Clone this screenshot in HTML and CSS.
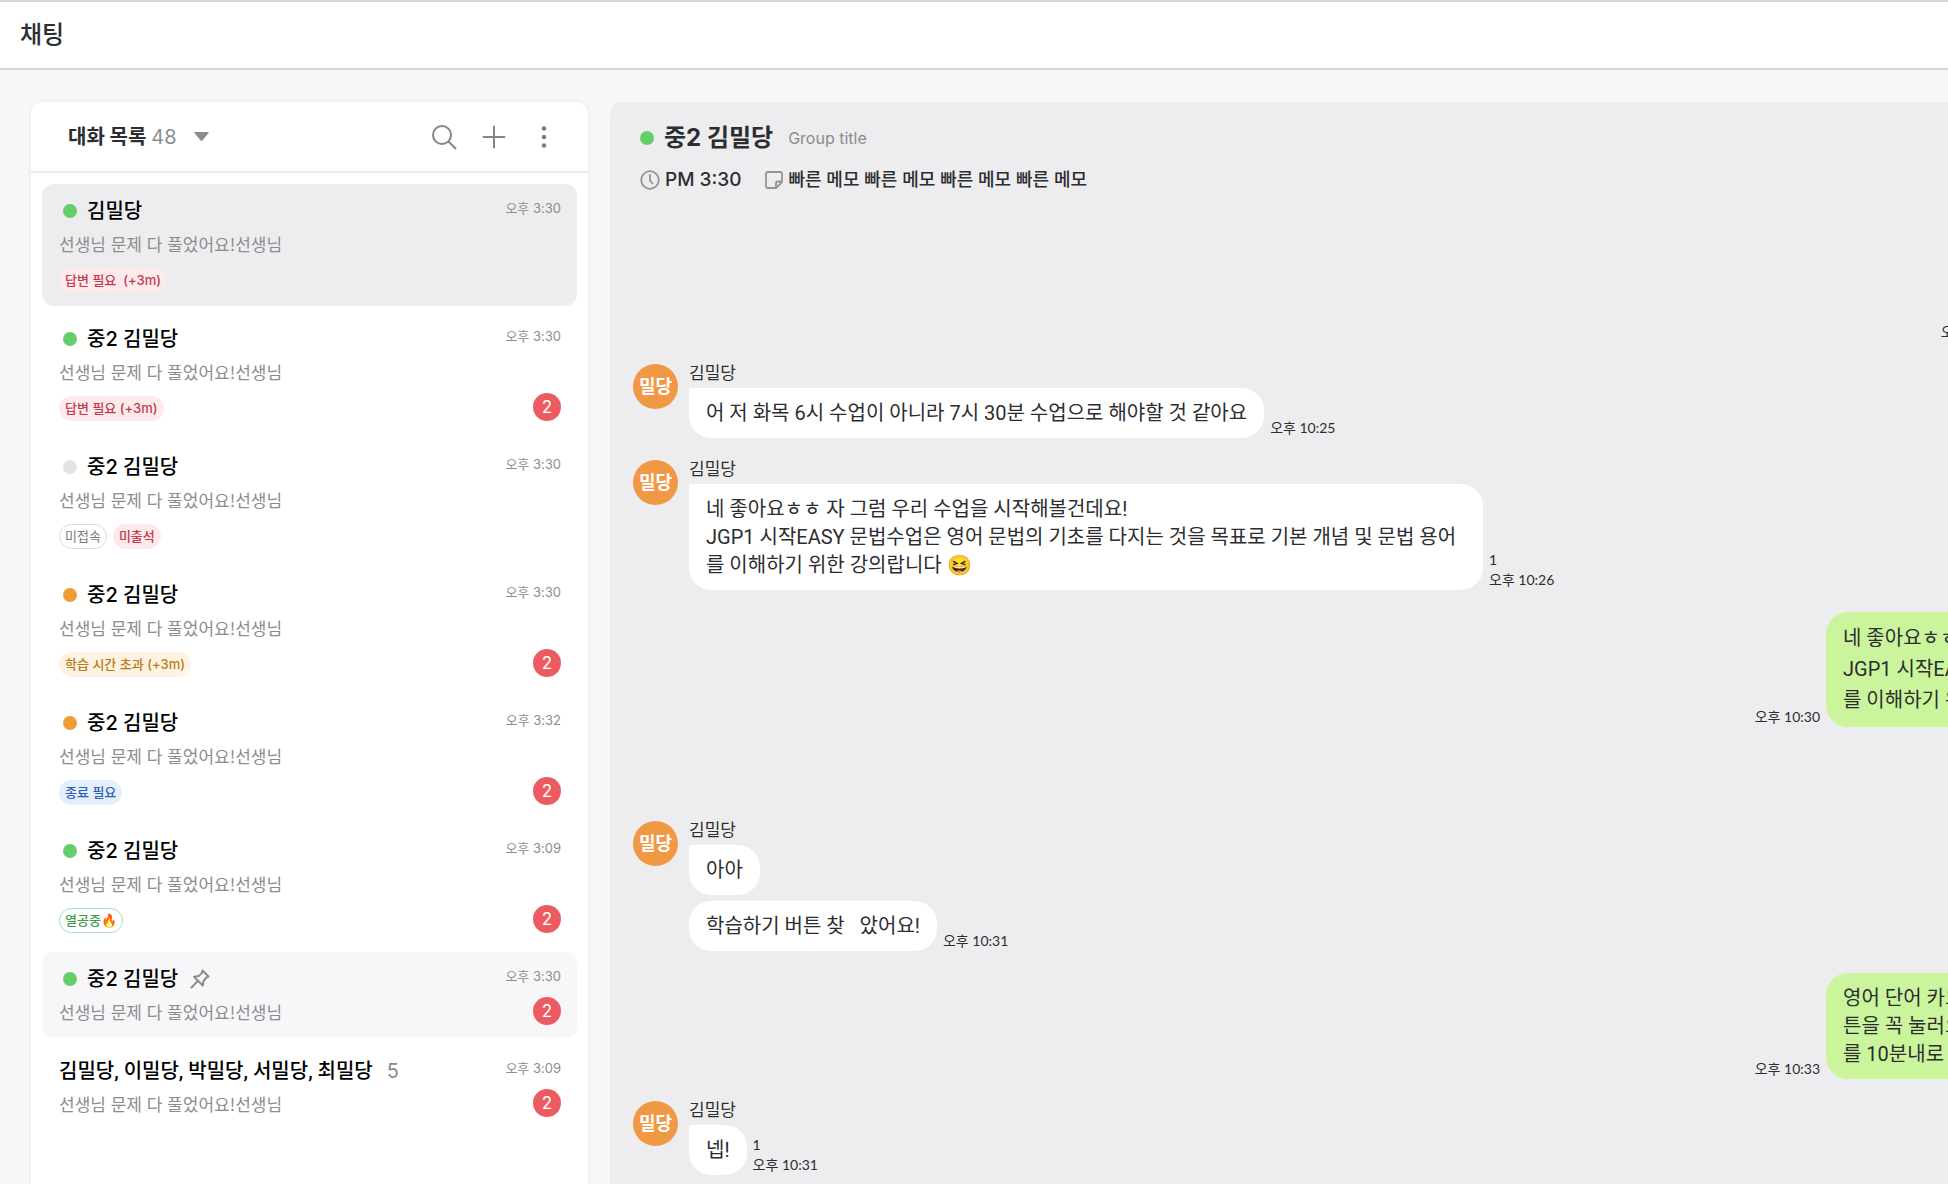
FILE: index.html
```html
<!DOCTYPE html>
<html lang="ko">
<head>
    <meta charset="UTF-8">
    <meta name="viewport" content="width=device-width, initial-scale=1.0">
    <title>채팅</title>
    <link rel="stylesheet" href="styles.css">
</head>
<body>
    <header class="topbar">
        <h1>채팅</h1>
    </header>

    <main class="layout">
        <section class="rooms">
            <div class="rooms-header">
                <button class="filter" type="button">
                    <strong>대화 목록</strong>
                    <span class="count">48</span>
                    <svg class="caret" width="15" height="9" viewBox="0 0 15 9"><path d="M1 0h13q1.4 0 .6 1L8.400 8.400q-.9.9-1.800 0L.4 1Q-.4 0 1 0z" fill="#8c8c8e"/></svg>
                </button>
                <div class="actions">
                    <button type="button" aria-label="검색">
                        <svg width="26" height="26" viewBox="0 0 26 26" fill="none" stroke="#858587" stroke-width="2" stroke-linecap="round"><circle cx="11" cy="11" r="9"/><path d="M17.500 17.500l7 7"/></svg>
                    </button>
                    <button type="button" aria-label="대화 추가">
                        <svg width="26" height="26" viewBox="0 0 26 26" fill="none" stroke="#858587" stroke-width="2" stroke-linecap="round"><path d="M13 2.500v21M2.500 13h21"/></svg>
                    </button>
                    <button type="button" aria-label="더보기">
                        <svg width="26" height="26" viewBox="0 0 26 26" fill="#7b7b7d"><circle cx="13" cy="4.500" r="2.200"/><circle cx="13" cy="13" r="2.200"/><circle cx="13" cy="21.500" r="2.200"/></svg>
                    </button>
                </div>
            </div>

            <ul class="room-list">
                <li>
                    <a class="room selected" href="#">
                        <div class="room-main">
                            <div class="room-name"><i class="dot green"></i>김밀당</div>
                            <p class="preview">선생님 문제 다 풀었어요!선생님</p>
                            <div class="tags"><span class="tag red">답변 필요&nbsp; (+3m)</span></div>
                        </div>
                        <div class="room-side"><time>오후 3:30</time></div>
                    </a>
                </li>
                <li>
                    <a class="room" href="#">
                        <div class="room-main">
                            <div class="room-name"><i class="dot green"></i>중2 김밀당</div>
                            <p class="preview">선생님 문제 다 풀었어요!선생님</p>
                            <div class="tags"><span class="tag red">답변 필요 (+3m)</span></div>
                        </div>
                        <div class="room-side"><time>오후 3:30</time><span class="badge">2</span></div>
                    </a>
                </li>
                <li>
                    <a class="room" href="#">
                        <div class="room-main">
                            <div class="room-name"><i class="dot gray"></i>중2 김밀당</div>
                            <p class="preview">선생님 문제 다 풀었어요!선생님</p>
                            <div class="tags"><span class="tag outline">미접속</span><span class="tag red">미출석</span></div>
                        </div>
                        <div class="room-side"><time>오후 3:30</time></div>
                    </a>
                </li>
                <li>
                    <a class="room" href="#">
                        <div class="room-main">
                            <div class="room-name"><i class="dot orange"></i>중2 김밀당</div>
                            <p class="preview">선생님 문제 다 풀었어요!선생님</p>
                            <div class="tags"><span class="tag yellow">학습 시간 초과 (+3m)</span></div>
                        </div>
                        <div class="room-side"><time>오후 3:30</time><span class="badge">2</span></div>
                    </a>
                </li>
                <li>
                    <a class="room" href="#">
                        <div class="room-main">
                            <div class="room-name"><i class="dot orange"></i>중2 김밀당</div>
                            <p class="preview">선생님 문제 다 풀었어요!선생님</p>
                            <div class="tags"><span class="tag blue">종료 필요</span></div>
                        </div>
                        <div class="room-side"><time>오후 3:32</time><span class="badge">2</span></div>
                    </a>
                </li>
                <li>
                    <a class="room" href="#">
                        <div class="room-main">
                            <div class="room-name"><i class="dot green"></i>중2 김밀당</div>
                            <p class="preview">선생님 문제 다 풀었어요!선생님</p>
                            <div class="tags"><span class="tag outline-green">열공중🔥</span></div>
                        </div>
                        <div class="room-side"><time>오후 3:09</time><span class="badge">2</span></div>
                    </a>
                </li>
                <li>
                    <a class="room hover" href="#">
                        <div class="room-main">
                            <div class="room-name">
                                <i class="dot green"></i>중2 김밀당
                                <svg class="pin" width="20" height="20" viewBox="0 0 20 20" fill="none" stroke="#8c8c8e" stroke-width="2" stroke-linejoin="round" stroke-linecap="round"><path d="M12.500 1.500l6 6-2 .8-3 3.700-.6 4.600-8.900-8.900 4.700-.6 3.300-3.200zM7.500 12.200L1.500 18.500"/></svg>
                            </div>
                            <p class="preview">선생님 문제 다 풀었어요!선생님</p>
                        </div>
                        <div class="room-side"><time>오후 3:30</time><span class="badge">2</span></div>
                    </a>
                </li>
                <li>
                    <a class="room" href="#">
                        <div class="room-main">
                            <div class="room-name group-name">김밀당, 이밀당, 박밀당, 서밀당, 최밀당 <span class="members">5</span></div>
                            <p class="preview">선생님 문제 다 풀었어요!선생님</p>
                        </div>
                        <div class="room-side"><time>오후 3:09</time><span class="badge">2</span></div>
                    </a>
                </li>
            </ul>
        </section>

        <section class="chat">
            <div class="chat-header">
                <div class="chat-title">
                    <i class="dot green"></i>
                    <h2>중2 김밀당</h2>
                    <span class="group">Group title</span>
                </div>
                <div class="chat-info">
                    <svg width="20" height="20" viewBox="0 0 20 20" fill="none" stroke="#949496" stroke-width="1.800" stroke-linecap="round" stroke-linejoin="round"><circle cx="10" cy="10" r="8.800"/><path d="M10 5v5.500l2.500 3"/></svg>
                    <span class="class-time">PM 3:30</span>
                    <svg width="18" height="18" viewBox="0 0 18 18" fill="none" stroke="#949496" stroke-width="1.800" stroke-linejoin="round"><path d="M3 1h12q2 0 2 2v8l-6 6H3q-2 0-2-2V3q0-2 2-2z"/><path d="M17 10.500h-4q-2 0-2 2V17"/></svg>
                    <span>빠른 메모 빠른 메모 빠른 메모 빠른 메모</span>
                </div>
            </div>

            <div class="thread">
                <div class="message mine">
                    <div class="bubble half">네 좋아요ㅎㅎ 자 그럼 우리 수업을 시작해볼건데요!</div>
                    <div class="meta"><time>오후 10:24</time></div>
                </div>

                <div class="message">
                    <div class="avatar">밀당</div>
                    <div class="body">
                        <div class="sender">김밀당</div>
                        <div class="line">
                            <div class="bubble first">어 저 화목 6시 수업이 아니라 7시 30분 수업으로 해야할 것 같아요</div>
                            <div class="meta"><time>오후 10:25</time></div>
                        </div>
                    </div>
                </div>

                <div class="message">
                    <div class="avatar">밀당</div>
                    <div class="body">
                        <div class="sender">김밀당</div>
                        <div class="line">
                            <div class="bubble first wide">네 좋아요ㅎㅎ 자 그럼 우리 수업을 시작해볼건데요!<br>JGP1 시작EASY 문법수업은 영어 문법의 기초를 다지는 것을 목표로 기본 개념 및 문법 용어<br>를 이해하기 위한 강의랍니다 😆</div>
                            <div class="meta"><span>1</span><time>오후 10:26</time></div>
                        </div>
                    </div>
                </div>

                <div class="message mine">
                    <div class="bubble wide loose">네 좋아요ㅎㅎ 자 그럼 우리 수업을 시작해볼건데요!<br>JGP1 시작EASY 문법수업은 영어 문법의 기초를 다지는 것을 목표로 기본 개념 및 문법 용어<br>를 이해하기 위한 강의랍니다</div>
                    <div class="meta"><time>오후 10:30</time></div>
                </div>

                <div class="message mine">
                    <div class="bubble">네!</div>
                    <div class="meta"><time>오후 10:30</time></div>
                </div>

                <div class="message">
                    <div class="avatar">밀당</div>
                    <div class="body">
                        <div class="sender">김밀당</div>
                        <div class="line">
                            <div class="bubble first">아아</div>
                        </div>
                        <div class="line">
                            <div class="bubble">학습하기 버튼 찾   았어요!</div>
                            <div class="meta"><time>오후 10:31</time></div>
                        </div>
                    </div>
                </div>

                <div class="message mine">
                    <div class="bubble wide">영어 단어 카드<br>튼을 꼭 눌러요<br>를 10분내로</div>
                    <div class="meta"><time>오후 10:33</time></div>
                </div>

                <div class="message">
                    <div class="avatar">밀당</div>
                    <div class="body">
                        <div class="sender">김밀당</div>
                        <div class="line">
                            <div class="bubble first">넵!</div>
                            <div class="meta"><span>1</span><time>오후 10:31</time></div>
                        </div>
                    </div>
                </div>
            </div>
        </section>
    </main>
</body>
</html>
```
FILE: styles.css
```css
* {
    box-sizing: border-box;
}
body {
    margin: 0;
    height: 100vh;
    display: flex;
    flex-direction: column;
    overflow: hidden;
    background-color: #f7f7fa;
    color: #2c2d30;
    font-family: Inter, "Noto Sans CJK KR", sans-serif;
}
h1, h2, p, ul {
    margin: 0;
    padding: 0;
}
ul {
    list-style: none;
}
button {
    padding: 0;
    border: none;
    background: none;
    color: inherit;
    font-family: inherit;
    cursor: pointer;
}
svg {
    display: block;
    flex: none;
}

.topbar {
    flex: none;
    padding: 17px 20px;
    background-color: #fff;
    border-top: 2px solid #d8d8da;
    border-bottom: 2px solid #d8d8da;
}
.topbar h1 {
    font-size: 24px;
    line-height: 32px;
    font-weight: 500;
}

.layout {
    flex: 1;
    min-height: 0;
    display: flex;
    gap: 22px;
    padding: 32px 0 0 31px;
}

/* room list */
.rooms {
    flex: none;
    width: 557px;
    background-color: #fff;
    border-radius: 12px 12px 0 0;
    box-shadow: 0 0 4px rgba(0, 0, 0, 0.08);
}
.rooms-header {
    display: flex;
    justify-content: space-between;
    align-items: center;
    height: 71px;
    padding: 0 31px 0 37px;
    border-bottom: 2px solid #ececee;
}
.filter {
    display: flex;
    align-items: center;
    gap: 5px;
    font-size: 20px;
    line-height: 28px;
}
.count {
    color: #8c8c8e;
}
.caret {
    margin-left: 12px;
}
.actions {
    display: flex;
    gap: 24px;
}

.room-list {
    display: flex;
    flex-direction: column;
    gap: 6px;
    padding: 11px;
}
.room {
    display: flex;
    justify-content: space-between;
    min-height: 86px;
    padding: 14px 16px 13px 17px;
    border-radius: 12px;
    color: #000;
    text-decoration: none;
}
.room.selected {
    background-color: #ededef;
}
.room.hover {
    background-color: #f7f7fa;
}
.room-name {
    display: flex;
    align-items: center;
    font-size: 20px;
    line-height: 26px;
    font-weight: 500;
}
.group-name {
    font-family: Roboto, "Noto Sans CJK KR", sans-serif;
}
.dot {
    flex: none;
    width: 14px;
    height: 14px;
    border-radius: 50%;
}
.room-name .dot {
    margin: 0 10px 0 4px;
}
.dot.green {
    background-color: #63cf6b;
}
.dot.gray {
    background-color: #e3e3e4;
}
.dot.orange {
    background-color: #f09c35;
}
.pin {
    margin-left: 12px;
}
.members {
    margin-left: 14px;
    color: #8c8c8e;
    font-family: Inter, sans-serif;
    font-weight: 400;
}
.preview {
    margin-top: 8px;
    color: #8c8c8e;
    font-family: "Noto Sans CJK KR", sans-serif;
    font-size: 17px;
    line-height: 24px;
}
.tags {
    display: flex;
    gap: 6px;
    margin-top: 12px;
}
.tag {
    padding: 0 5px;
    border: 1px solid transparent;
    border-radius: 13px;
    font-size: 13px;
    line-height: 23px;
    font-weight: 500;
}
.tag.red {
    background-color: #fdebec;
    color: #c23a50;
}
.tag.yellow {
    background-color: #fef2e2;
    color: #b97a18;
}
.tag.blue {
    background-color: #e3effc;
    color: #2a62b8;
}
.tag.outline {
    border-color: #dcdcde;
    color: #7b7b7d;
    font-weight: 400;
}
.tag.outline-green {
    border-color: #a9dfae;
    color: #3f9c4b;
}
.room-side {
    display: flex;
    flex-direction: column;
    justify-content: space-between;
    align-items: flex-end;
    color: #8c8c8e;
    font-size: 13px;
    line-height: 20px;
}
.badge {
    width: 28px;
    height: 28px;
    border-radius: 50%;
    background-color: #eb5c62;
    color: #fff;
    font-size: 17px;
    line-height: 28px;
    text-align: center;
}

/* conversation, runs past the right edge of the window */
.chat {
    flex: 1;
    margin-right: -696px;
    padding: 20px 24px 0 23px;
    background-color: #ededef;
    border-radius: 12px 0 0 0;
}
.chat-header {
    padding-left: 7px;
}
.chat-title {
    display: flex;
    align-items: center;
    line-height: 32px;
}
.chat-title h2 {
    margin: 0 15px 0 10px;
    font-size: 24px;
}
.group {
    color: #8c8c8e;
    font-size: 16px;
}
.chat-info {
    display: flex;
    align-items: center;
    gap: 5px;
    margin-top: 14px;
    font-size: 18px;
    line-height: 24px;
    font-weight: 500;
}
.class-time {
    margin-right: 19px;
    font-size: 19px;
}

.thread {
    display: flex;
    flex-direction: column;
    gap: 22px;
    padding-top: 100px;
}
.message {
    display: flex;
    gap: 11px;
}
.message.mine {
    flex-direction: row-reverse;
    gap: 6px;
}
.avatar {
    flex: none;
    width: 45px;
    height: 45px;
    border-radius: 50%;
    background-color: #f19845;
    color: #fff;
    font-size: 18px;
    line-height: 45px;
    font-weight: 700;
    text-align: center;
}
.body {
    display: flex;
    flex-direction: column;
    gap: 6px;
}
.sender {
    font-size: 17px;
    line-height: 18px;
}
.line {
    display: flex;
    gap: 6px;
}
.bubble {
    padding: 11px 17px;
    border-radius: 22px;
    background-color: #fff;
    font-family: Roboto, "Noto Sans CJK KR", sans-serif;
    font-size: 20px;
    line-height: 28px;
    white-space: pre;
}
.bubble.first {
    border-top-left-radius: 0;
}
.bubble.wide {
    width: 794px;
}
.bubble.half {
    width: 608px;
}
.bubble.loose {
    line-height: 31px;
}
.mine .bubble {
    background-color: #cbf59c;
}
.meta {
    display: flex;
    flex-direction: column;
    justify-content: flex-end;
    font-family: Lato, "Noto Sans CJK KR", sans-serif;
    font-size: 14px;
    line-height: 20px;
}
```
